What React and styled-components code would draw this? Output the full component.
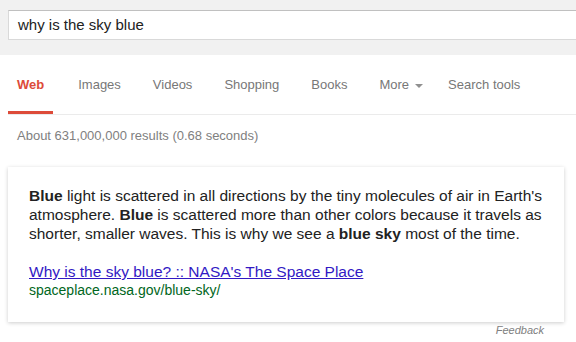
import React from "react";
import styled, { createGlobalStyle } from "styled-components";

const GlobalStyle = createGlobalStyle`
  html, body {
    margin: 0;
    padding: 0;
    background: #ffffff;
    font-family: "Liberation Sans", Arial, sans-serif;
  }
  body { overflow: hidden; }
`;

const Page = styled.div`
  width: 576px;
  height: 342px;
  overflow: hidden;
  background: #fff;
`;

const Header = styled.header`
  box-sizing: border-box;
  height: 55px;
  padding: 10px 0 0 8px;
  background: #f1f1f1;
  overflow: hidden;
`;

const SearchBox = styled.div`
  box-sizing: border-box;
  height: 30px;
  width: calc(100% + 20px);
  background: #fff;
  border: 1px solid #d9d9d9;
  border-top-color: #c0c0c0;
  padding-left: 9px;
  display: flex;
  align-items: center;
`;

const SearchText = styled.span`
  font-size: 15px;
  line-height: 28px;
  color: #222;
`;

const Nav = styled.nav`
  display: flex;
  align-items: flex-start;
  gap: 14px;
  margin-left: 8px;
  border-bottom: 1px solid #ebebeb;
`;

const Tab = styled.a`
  box-sizing: border-box;
  display: flex;
  align-items: flex-start;
  height: 59px;
  padding: 22px 9px 0;
  margin-left: ${(p) => p.$shift || 0}px;
  margin-right: ${(p) => (p.$active ? 2 : 0)}px;
  font-size: 13px;
  line-height: 16px;
  color: ${(p) => (p.$active ? "#dd4b39" : "#777")};
  font-weight: ${(p) => (p.$active ? "bold" : "normal")};
  border-bottom: 3px solid ${(p) => (p.$active ? "#dd4b39" : "transparent")};
  text-decoration: none;
  white-space: nowrap;
`;

const Caret = styled.span`
  display: inline-block;
  width: 0;
  height: 0;
  margin: 7px 0 0 6px;
  border-left: 4px solid transparent;
  border-right: 4px solid transparent;
  border-top: 4px solid #909090;
`;

const Main = styled.main`
  padding-left: 8px;
`;

const Stats = styled.div`
  margin: 13px 0 0 9px;
  font-size: 13px;
  line-height: 16px;
  color: #808080;
`;

const Card = styled.section`
  box-sizing: border-box;
  width: 556px;
  margin-top: 23px;
  padding: 19px 12px 23px 21px;
  background: #fff;
  box-shadow: 0 1px 4px rgba(0, 0, 0, 0.2);
`;

const Answer = styled.p`
  margin: 0 0 19px;
  font-size: 15.5px;
  line-height: 19px;
  color: #222;

  b {
    font-weight: bold;
  }
`;

const SourceLink = styled.a`
  display: block;
  font-size: 15.5px;
  line-height: 19px;
  color: #3219c4;
  text-decoration: underline;
`;

const SourceUrl = styled.div`
  font-size: 14px;
  line-height: 18px;
  color: #006621;
`;

const FeedbackRow = styled.div`
  width: 556px;
  display: flex;
  justify-content: flex-end;
  margin-top: 2px;
`;

const Feedback = styled.a`
  margin-right: 20px;
  font-size: 11px;
  line-height: 13px;
  font-style: italic;
  color: #808080;
`;

const tabs = ["Web", "Images", "Videos", "Shopping", "Books"];

export default function App() {
  return (
    <Page>
      <GlobalStyle />
      <Header>
        <SearchBox>
          <SearchText>why is the sky blue</SearchText>
        </SearchBox>
      </Header>
      <Nav>
        {tabs.map((t, i) => (
          <Tab key={t} $active={i === 0}>
            {t}
          </Tab>
        ))}
        <Tab>
          More
          <Caret />
        </Tab>
        <Tab $shift={-7}>Search tools</Tab>
      </Nav>
      <Main>
        <Stats>About 631,000,000 results (0.68 seconds)</Stats>
        <Card>
          <Answer>
            <b>Blue</b> light is scattered in all directions by the tiny molecules of air in
            Earth's atmosphere. <b>Blue</b> is scattered more than other colors because it
            travels as shorter, smaller waves. This is why we see a <b>blue sky</b> most of
            the time.
          </Answer>
          <SourceLink>Why is the sky blue? :: NASA's The Space Place</SourceLink>
          <SourceUrl>spaceplace.nasa.gov/blue-sky/</SourceUrl>
        </Card>
        <FeedbackRow>
          <Feedback>Feedback</Feedback>
        </FeedbackRow>
      </Main>
    </Page>
  );
}
